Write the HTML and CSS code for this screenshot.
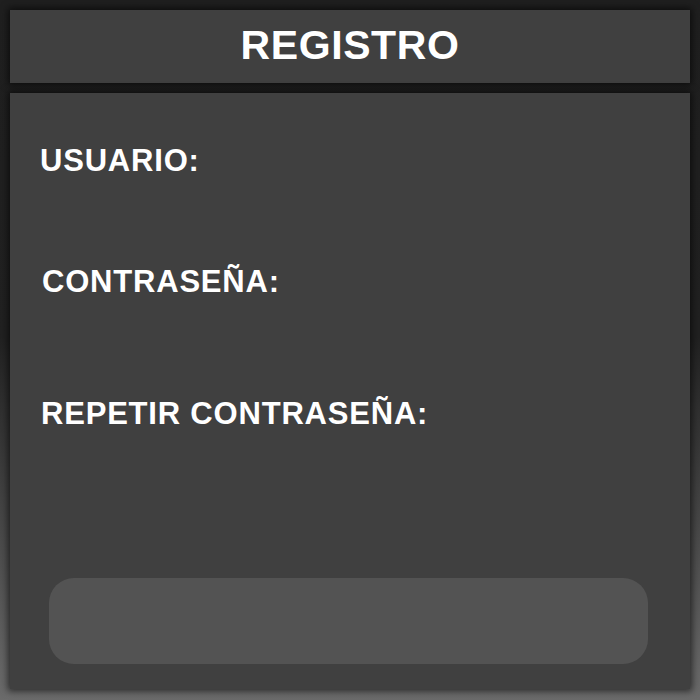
FILE: index.html
```html
<!DOCTYPE html>
<html lang="es">
<head>
<meta charset="utf-8">
<title>Registro</title>
<link rel="stylesheet" href="styles.css">
</head>
<body>
<div class="screen">
  <header class="title-bar">
    <h1 class="title">REGISTRO</h1>
  </header>
  <main class="panel">
    <div class="field field-user">
      <label class="label">USUARIO:</label>
    </div>
    <div class="field field-pass">
      <label class="label">CONTRASEÑA:</label>
    </div>
    <div class="field field-repeat">
      <label class="label">REPETIR CONTRASEÑA:</label>
    </div>
    <button class="submit" type="button"></button>
  </main>
</div>
</body>
</html>
```

FILE: styles.css
```css
html, body {
  margin: 0;
  padding: 0;
}

body {
  width: 700px;
  height: 700px;
  background: linear-gradient(180deg, #1f1f1f 0%, #212121 48%, #6b6b6b 100%);
  font-family: "Liberation Sans", Arial, sans-serif;
  color: #ffffff;
}

.screen {
  box-sizing: border-box;
  height: 700px;
  padding: 10px 10px 11px 10px;
  display: flex;
  flex-direction: column;
  gap: 10px;
}

.title-bar {
  height: 73px;
  background: #404040;
  box-shadow: 0 0 7px 2px rgba(0, 0, 0, 0.6);
  display: flex;
  align-items: center;
  justify-content: center;
  padding-bottom: 4px;
  box-sizing: border-box;
}

.title {
  margin: 0;
  font-size: 41px;
  font-weight: bold;
  line-height: 48px;
  letter-spacing: 0.6px;
}

.panel {
  flex: 1;
  background: #404040;
  box-shadow: 0 0 7px 2px rgba(0, 0, 0, 0.6);
  display: flex;
  flex-direction: column;
  padding: 50px 42px 25px 30px;
}

.label {
  display: block;
  font-size: 31px;
  font-weight: bold;
  line-height: 36px;
  letter-spacing: 0.8px;
}

.field-pass {
  margin-top: 85px;
  padding-left: 2px;
}

.field-repeat {
  margin-top: 96px;
  padding-left: 1px;
}

.submit {
  margin-top: auto;
  margin-left: 9px;
  width: 599px;
  height: 86px;
  border: none;
  border-radius: 25px;
  background: #535353;
  padding: 0;
}
```
